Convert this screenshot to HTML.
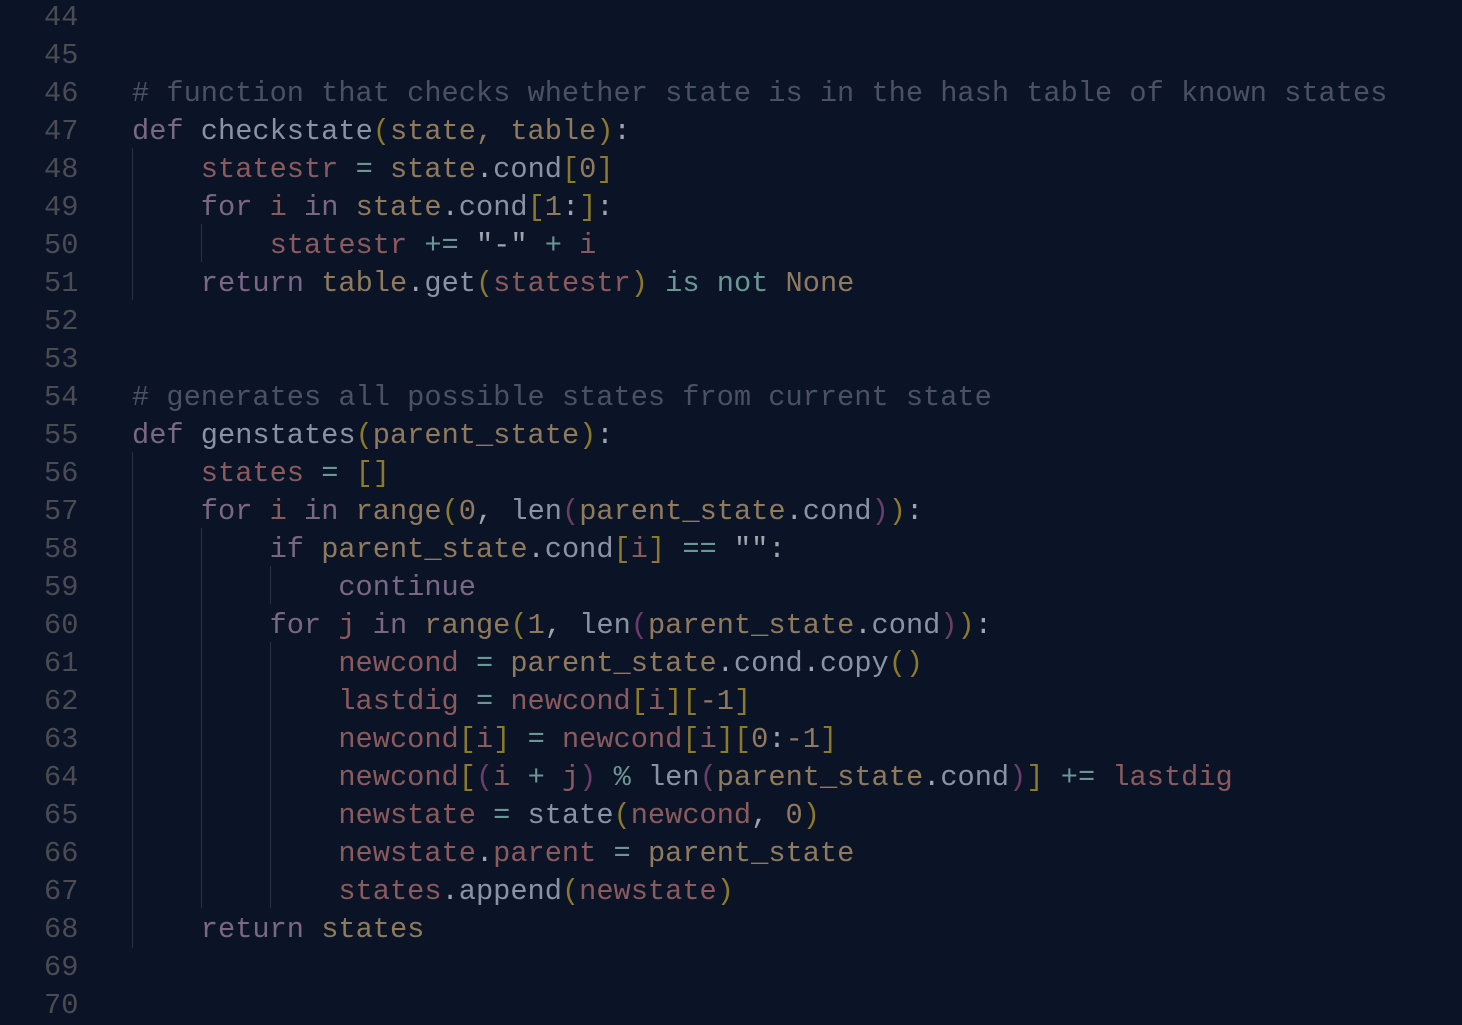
<!DOCTYPE html>
<html><head><meta charset="utf-8"><style>
html,body{margin:0;padding:0;background:#0b1327;width:1462px;height:1022px;overflow:hidden}
.w{position:absolute;left:0;top:-1px;width:1462px;font-family:"Liberation Mono",monospace;font-size:28.67px;line-height:38px}
.l{height:38px;position:relative}
.n{position:absolute;left:44px;width:34px;color:#4b4c52;text-align:right;white-space:pre}
.t{position:absolute;left:132px;white-space:pre}
.g{position:absolute;width:1px;background:#2a3142}
.k{color:#7a6686}.f{color:#8a93a6}.p{color:#8f7a5c}.v{color:#8a5a5c}.o{color:#6a9794}.b{color:#8c7a28}.q{color:#6c3d6c}.c{color:#4b5163}.s{color:#a0a4ae}
</style></head><body>
<div class="g" style="left:132px;top:148px;height:152px"></div>
<div class="g" style="left:201px;top:224px;height:38px"></div>
<div class="g" style="left:132px;top:452px;height:496px"></div>
<div class="g" style="left:201px;top:528px;height:380px"></div>
<div class="g" style="left:270px;top:566px;height:38px"></div>
<div class="g" style="left:270px;top:642px;height:266px"></div>
<div class="w"><div class="l"><span class="n">44</span></div><div class="l"><span class="n">45</span></div><div class="l"><span class="n">46</span><span class="t c"># function that checks whether state is in the hash table of known states</span></div><div class="l"><span class="n">47</span><span class="t"><span class="k">def</span> <span class="f">checkstate</span><span class="b">(</span><span class="p">state, table</span><span class="b">)</span><span class="s">:</span></span></div><div class="l"><span class="n">48</span><span class="t">    <span class="v">statestr</span> <span class="o">=</span> <span class="p">state</span><span class="s">.</span><span class="f">cond</span><span class="b">[</span><span class="p">0</span><span class="b">]</span></span></div><div class="l"><span class="n">49</span><span class="t">    <span class="k">for</span> <span class="v">i</span> <span class="k">in</span> <span class="p">state</span><span class="s">.</span><span class="f">cond</span><span class="b">[</span><span class="p">1</span><span class="s">:</span><span class="b">]</span><span class="s">:</span></span></div><div class="l"><span class="n">50</span><span class="t">        <span class="v">statestr</span> <span class="o">+=</span> <span class="s">"-"</span> <span class="o">+</span> <span class="v">i</span></span></div><div class="l"><span class="n">51</span><span class="t">    <span class="k">return</span> <span class="p">table</span><span class="s">.</span><span class="f">get</span><span class="b">(</span><span class="v">statestr</span><span class="b">)</span> <span class="o">is not</span> <span class="p">None</span></span></div><div class="l"><span class="n">52</span></div><div class="l"><span class="n">53</span></div><div class="l"><span class="n">54</span><span class="t c"># generates all possible states from current state</span></div><div class="l"><span class="n">55</span><span class="t"><span class="k">def</span> <span class="f">genstates</span><span class="b">(</span><span class="p">parent_state</span><span class="b">)</span><span class="s">:</span></span></div><div class="l"><span class="n">56</span><span class="t">    <span class="v">states</span> <span class="o">=</span> <span class="b">[]</span></span></div><div class="l"><span class="n">57</span><span class="t">    <span class="k">for</span> <span class="v">i</span> <span class="k">in</span> <span class="p">range</span><span class="b">(</span><span class="p">0</span><span class="s">,</span> <span class="f">len</span><span class="q">(</span><span class="p">parent_state</span><span class="s">.</span><span class="f">cond</span><span class="q">)</span><span class="b">)</span><span class="s">:</span></span></div><div class="l"><span class="n">58</span><span class="t">        <span class="k">if</span> <span class="p">parent_state</span><span class="s">.</span><span class="f">cond</span><span class="b">[</span><span class="v">i</span><span class="b">]</span> <span class="o">==</span> <span class="s">"":</span></span></div><div class="l"><span class="n">59</span><span class="t">            <span class="k">continue</span></span></div><div class="l"><span class="n">60</span><span class="t">        <span class="k">for</span> <span class="v">j</span> <span class="k">in</span> <span class="p">range</span><span class="b">(</span><span class="p">1</span><span class="s">,</span> <span class="f">len</span><span class="q">(</span><span class="p">parent_state</span><span class="s">.</span><span class="f">cond</span><span class="q">)</span><span class="b">)</span><span class="s">:</span></span></div><div class="l"><span class="n">61</span><span class="t">            <span class="v">newcond</span> <span class="o">=</span> <span class="p">parent_state</span><span class="s">.</span><span class="f">cond</span><span class="s">.</span><span class="f">copy</span><span class="b">()</span></span></div><div class="l"><span class="n">62</span><span class="t">            <span class="v">lastdig</span> <span class="o">=</span> <span class="v">newcond</span><span class="b">[</span><span class="v">i</span><span class="b">][</span><span class="p">-1</span><span class="b">]</span></span></div><div class="l"><span class="n">63</span><span class="t">            <span class="v">newcond</span><span class="b">[</span><span class="v">i</span><span class="b">]</span> <span class="o">=</span> <span class="v">newcond</span><span class="b">[</span><span class="v">i</span><span class="b">][</span><span class="p">0</span><span class="s">:</span><span class="p">-1</span><span class="b">]</span></span></div><div class="l"><span class="n">64</span><span class="t">            <span class="v">newcond</span><span class="b">[</span><span class="q">(</span><span class="v">i</span> <span class="o">+</span> <span class="v">j</span><span class="q">)</span> <span class="o">%</span> <span class="f">len</span><span class="q">(</span><span class="p">parent_state</span><span class="s">.</span><span class="f">cond</span><span class="q">)</span><span class="b">]</span> <span class="o">+=</span> <span class="v">lastdig</span></span></div><div class="l"><span class="n">65</span><span class="t">            <span class="v">newstate</span> <span class="o">=</span> <span class="f">state</span><span class="b">(</span><span class="v">newcond</span><span class="s">,</span> <span class="p">0</span><span class="b">)</span></span></div><div class="l"><span class="n">66</span><span class="t">            <span class="v">newstate</span><span class="s">.</span><span class="v">parent</span> <span class="o">=</span> <span class="p">parent_state</span></span></div><div class="l"><span class="n">67</span><span class="t">            <span class="v">states</span><span class="s">.</span><span class="f">append</span><span class="b">(</span><span class="v">newstate</span><span class="b">)</span></span></div><div class="l"><span class="n">68</span><span class="t">    <span class="k">return</span> <span class="p">states</span></span></div><div class="l"><span class="n">69</span></div><div class="l"><span class="n">70</span></div></div>
</body></html>
